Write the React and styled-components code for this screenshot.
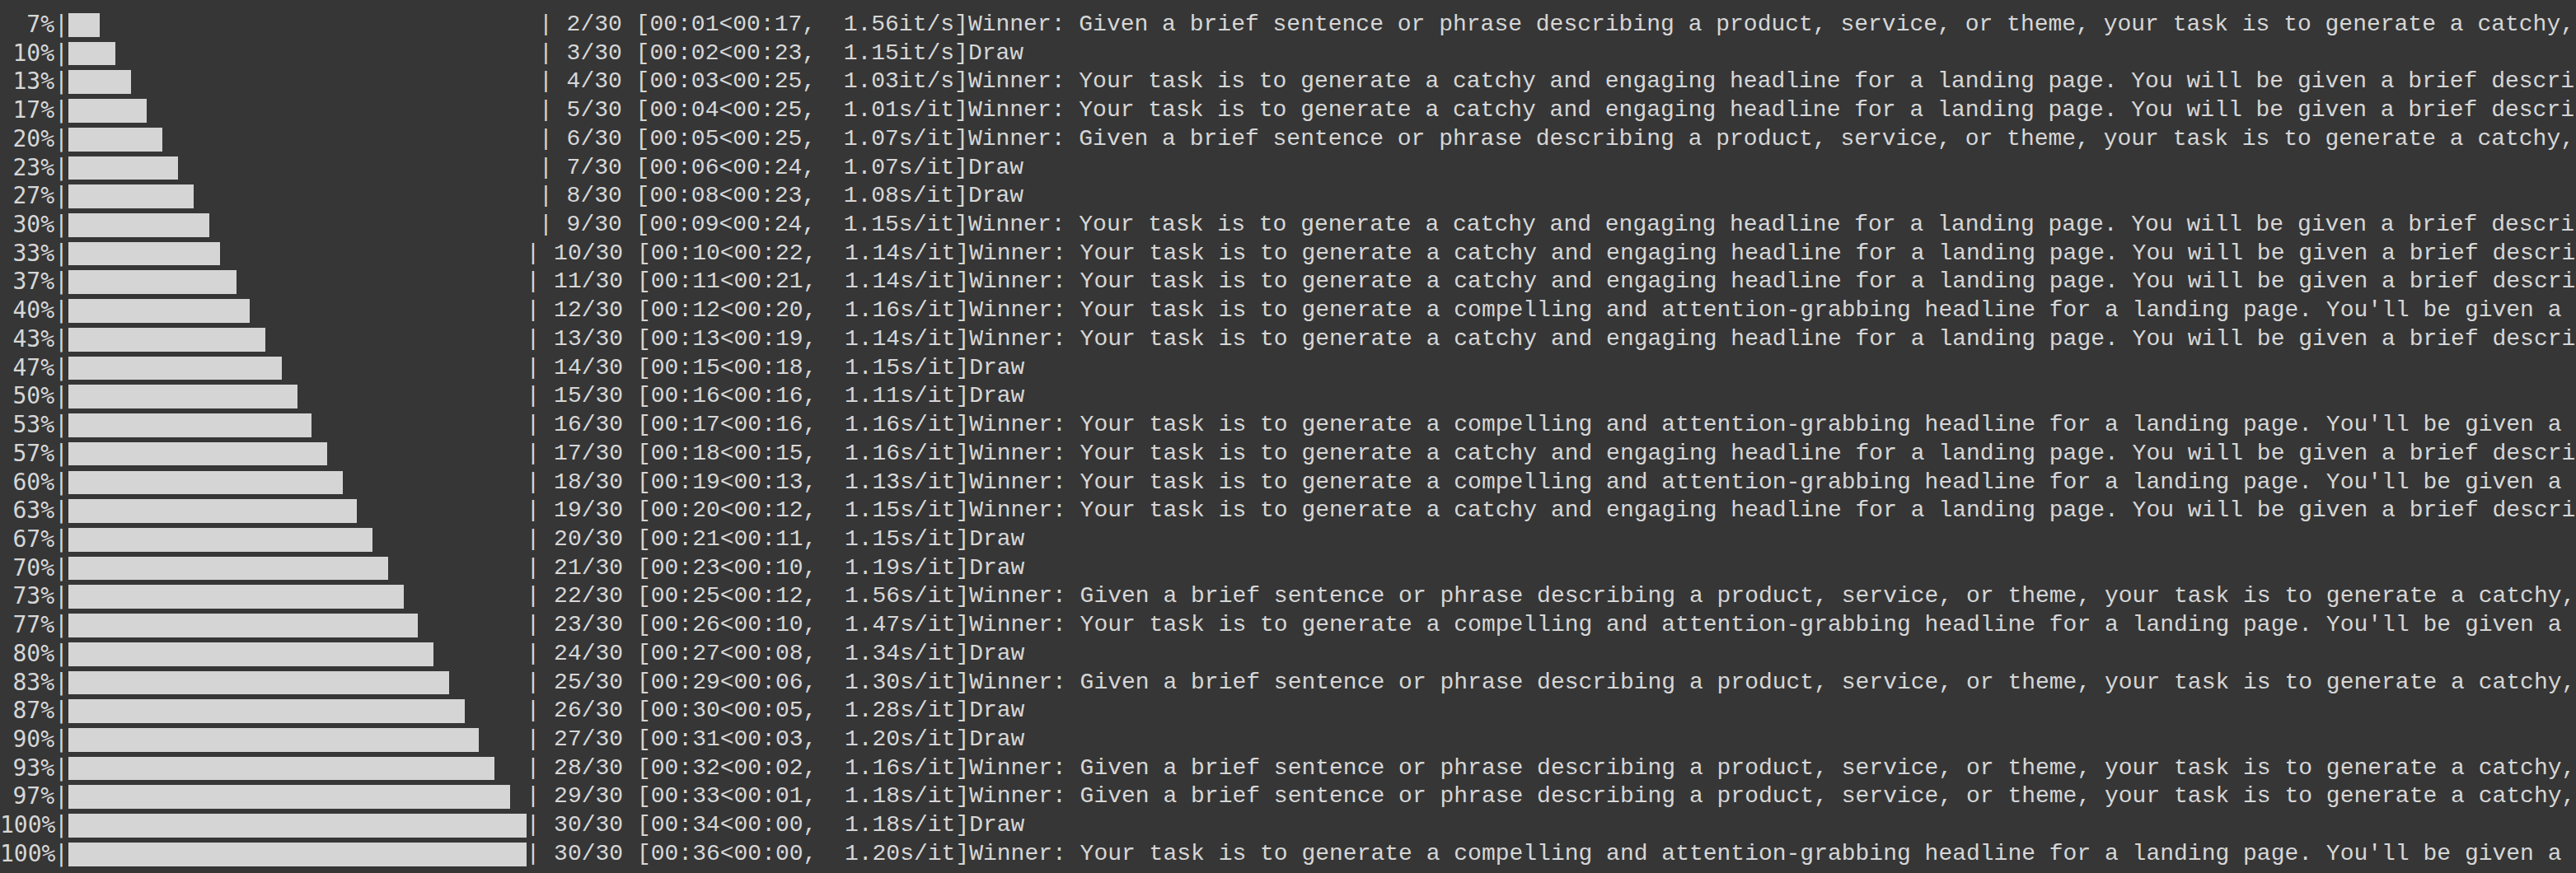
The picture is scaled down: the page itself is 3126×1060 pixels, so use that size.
import styled, { createGlobalStyle } from 'styled-components';

const GlobalStyle = createGlobalStyle`
    html, body {
        margin: 0;
        padding: 0;
        background-color: #363636;
        overflow: hidden;
    }
`;

const Terminal = styled.div`
    width: 3126px;
    height: 1060px;
    box-sizing: border-box;
    padding-top: 13px;
    background-color: #363636;
    color: #d6d6d6;
    overflow: hidden;
`;

const Row = styled.div`
    display: flex;
    align-items: center;
    height: 34.72px;
    white-space: pre;
`;

const Pct = styled.span`
    width: 66px;
    text-align: right;
    font-family: 'DejaVu Sans Mono', monospace;
    font-size: 28px;
    line-height: 34.72px;
    flex-shrink: 0;
`;

const LeftPipe = styled.span`
    width: 17px;
    text-align: center;
    font-family: 'DejaVu Sans Mono', monospace;
    font-size: 28px;
    line-height: 34.72px;
    flex-shrink: 0;
`;

const Track = styled.div`
    width: ${(p) => p.$w}px;
    height: 28.7px;
    flex-shrink: 0;
`;

const Fill = styled.div`
    height: 100%;
    background-color: #d5d5d5;
`;

const Info = styled.span`
    font-family: 'Liberation Mono', 'Courier New', monospace;
    font-size: 28px;
    line-height: 34.72px;
`;

const GIVEN = 'Winner: Given a brief sentence or phrase describing a product, service, or theme, your task is to generate a catchy, memorable tagline.';
const CATCHY = 'Winner: Your task is to generate a catchy and engaging headline for a landing page. You will be given a brief description of the product.';
const COMPEL = "Winner: Your task is to generate a compelling and attention-grabbing headline for a landing page. You'll be given a brief description.";
const DRAW = 'Draw';

const rows = [
    [2, '00:01<00:17', '1.56it/s', GIVEN],
    [3, '00:02<00:23', '1.15it/s', DRAW],
    [4, '00:03<00:25', '1.03it/s', CATCHY],
    [5, '00:04<00:25', '1.01s/it', CATCHY],
    [6, '00:05<00:25', '1.07s/it', GIVEN],
    [7, '00:06<00:24', '1.07s/it', DRAW],
    [8, '00:08<00:23', '1.08s/it', DRAW],
    [9, '00:09<00:24', '1.15s/it', CATCHY],
    [10, '00:10<00:22', '1.14s/it', CATCHY],
    [11, '00:11<00:21', '1.14s/it', CATCHY],
    [12, '00:12<00:20', '1.16s/it', COMPEL],
    [13, '00:13<00:19', '1.14s/it', CATCHY],
    [14, '00:15<00:18', '1.15s/it', DRAW],
    [15, '00:16<00:16', '1.11s/it', DRAW],
    [16, '00:17<00:16', '1.16s/it', COMPEL],
    [17, '00:18<00:15', '1.16s/it', CATCHY],
    [18, '00:19<00:13', '1.13s/it', COMPEL],
    [19, '00:20<00:12', '1.15s/it', CATCHY],
    [20, '00:21<00:11', '1.15s/it', DRAW],
    [21, '00:23<00:10', '1.19s/it', DRAW],
    [22, '00:25<00:12', '1.56s/it', GIVEN],
    [23, '00:26<00:10', '1.47s/it', COMPEL],
    [24, '00:27<00:08', '1.34s/it', DRAW],
    [25, '00:29<00:06', '1.30s/it', GIVEN],
    [26, '00:30<00:05', '1.28s/it', DRAW],
    [27, '00:31<00:03', '1.20s/it', DRAW],
    [28, '00:32<00:02', '1.16s/it', GIVEN],
    [29, '00:33<00:01', '1.18s/it', GIVEN],
    [30, '00:34<00:00', '1.18s/it', DRAW],
    [30, '00:36<00:00', '1.20s/it', COMPEL],
];

const TOTAL = 30;

// tqdm loses one bar cell once the counter gets a second digit
const ProgressRow = ({ n, time, rate, msg }) => {
    const cells = n < 10 ? 30 : 29;
    const trackW = n < 10 ? 571 : 555.5;
    const eighths = Math.floor((n / TOTAL) * cells * 8);
    const fillW = (eighths / 8 / cells) * trackW;
    const pct = Math.round((n / TOTAL) * 100);

    return (
        <Row>
            <Pct>{pct}%</Pct>
            <LeftPipe>|</LeftPipe>
            <Track $w={trackW}>
                <Fill style={{ width: fillW }} />
            </Track>
            <Info>{`| ${n}/${TOTAL} [${time},  ${rate}]${msg}`}</Info>
        </Row>
    );
};

const App = () => {
    return (
        <>
            <GlobalStyle />
            <Terminal>
                {rows.map(([n, time, rate, msg], i) => (
                    <ProgressRow key={i} n={n} time={time} rate={rate} msg={msg} />
                ))}
            </Terminal>
        </>
    );
};

export default App;
